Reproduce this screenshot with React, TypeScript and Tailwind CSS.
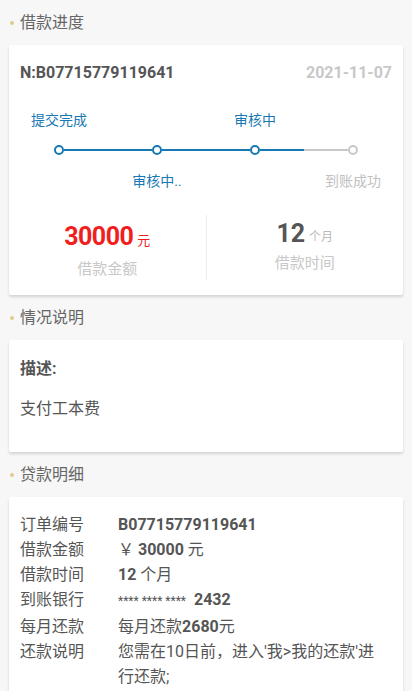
const FONT = { fontFamily: 'Roboto, "Noto Sans CJK SC", sans-serif' }

type Step = { top?: string; bottom?: string; done: boolean; leftOn?: boolean; rightOn?: boolean; first?: boolean; last?: boolean }

const steps: Step[] = [
  { top: '提交完成', done: true, rightOn: true, first: true },
  { bottom: '审核中..', done: true, leftOn: true, rightOn: true },
  { top: '审核中', done: true, leftOn: true, rightOn: true },
  { bottom: '到账成功', done: false, leftOn: false, last: true },
]

function SectionTitle({ children }: { children: React.ReactNode }) {
  return (
    <div className="flex h-[45px] items-center pl-[10px]">
      <span className="mr-[6px] h-[4px] w-[4px] rounded-full bg-[#e3c98f]" />
      <span className="text-[16px] text-[#666]">{children}</span>
    </div>
  )
}

function Line({ on, hidden }: { on?: boolean; hidden?: boolean }) {
  return (
    <div
      className={`h-[2px] flex-1 ${hidden ? 'bg-transparent' : on ? 'bg-[#1878b4]' : 'bg-[#c8c8c8]'}`}
    />
  )
}

export default function App() {
  return (
    <div className="min-h-screen bg-[#f7f7f7] pb-4" style={FONT}>
      <SectionTitle>借款进度</SectionTitle>

      {/* progress card */}
      <div className="mx-[9px] rounded-[2px] bg-white pb-[15px] pt-[18px] shadow-[0_2px_3px_rgba(0,0,0,0.15)]">
        <div className="flex h-[20px] items-center justify-between px-[11px]">
          <span className="text-[16px] font-bold text-[#555]">N:B07715779119641</span>
          <span className="text-[16px] font-bold text-[#c8c8c8]">2021-11-07</span>
        </div>

        <div className="mt-[27px] flex px-[1px]">
          {steps.map((s, i) => (
            <div key={i} className="flex w-[98px] flex-col">
              <div className="flex h-[20px] items-center justify-center text-[14px] text-[#1878b4]">
                {s.top ?? ''}
              </div>
              <div className="mt-[15px] flex h-[10px] items-center">
                <Line on={s.leftOn} hidden={s.first} />
                <div
                  className={`h-[10px] w-[10px] rounded-full border-2 bg-white ${
                    s.done ? 'border-[#1878b4]' : 'border-[#c8c8c8]'
                  }`}
                />
                <Line on={s.rightOn} hidden={s.last} />
              </div>
              <div
                className={`mt-[16px] flex h-[20px] items-center justify-center text-[14px] ${
                  s.done ? 'text-[#1878b4]' : 'text-[#c0c0c0]'
                }`}
              >
                {s.bottom ?? ''}
              </div>
            </div>
          ))}
        </div>

        <div className="mt-[24px] flex h-[65px]">
          <div className="flex flex-1 flex-col items-center pt-[6px]">
            <div className="flex h-[32px] items-end">
              <span className="text-[25px] font-bold leading-[32px] tracking-[-0.5px] text-[#f01e1e]">30000</span>
              <span className="mb-[3px] ml-[4px] text-[13px] leading-[18px] text-[#f01e1e]">元</span>
            </div>
            <div className="mt-[6px] text-[15px] leading-[20px] text-[#c8c8c8]">借款金额</div>
          </div>
          <div className="w-px bg-[#ececec]" />
          <div className="flex flex-1 flex-col items-center pt-[3px]">
            <div className="flex h-[32px] items-end">
              <span className="text-[25px] font-bold leading-[32px] text-[#555]">12</span>
              <span className="mb-[4px] ml-[4px] text-[12px] leading-[18px] text-[#bbb]">个月</span>
            </div>
            <div className="mt-[3px] text-[15px] leading-[20px] text-[#c8c8c8]">借款时间</div>
          </div>
        </div>
      </div>

      <SectionTitle>情况说明</SectionTitle>

      <div className="mx-[9px] h-[112px] rounded-[2px] bg-white px-[11px] pt-[18px] shadow-[0_2px_3px_rgba(0,0,0,0.15)]">
        <div className="text-[16px] font-bold leading-[22px] text-[#555]">描述:</div>
        <div className="mt-[18px] text-[16px] leading-[22px] text-[#555]">支付工本费</div>
      </div>

      <SectionTitle>贷款明细</SectionTitle>

      <div className="mx-[9px] rounded-[2px] bg-white pb-[10px] pl-[11px] pr-[22px] pt-[15px] text-[16px] leading-[25px] text-[#555] shadow-[0_2px_3px_rgba(0,0,0,0.15)]">
        {[
          ['订单编号', <span className="font-bold">B07715779119641</span>],
          [
            '借款金额',
            <span>
              ￥ <span className="font-bold">30000</span> 元
            </span>,
          ],
          [
            '借款时间',
            <span>
              <span className="font-bold">12</span> 个月
            </span>,
          ],
          [
            '到账银行',
            <span>
              <span className="text-[12px]">**** **** ****</span>
              <span className="ml-[8px] font-bold">2432</span>
            </span>,
          ],
          [
            '每月还款',
            <span>
              每月还款<span className="font-bold">2680</span>元
            </span>,
          ],
          ['还款说明', <span>您需在10日前，进入'我&gt;我的还款'进行还款;</span>],
        ].map(([label, value], i) => (
          <div key={i} className="flex">
            <div className="w-[98px] shrink-0">{label}</div>
            <div className="flex-1">{value}</div>
          </div>
        ))}
      </div>
    </div>
  )
}
